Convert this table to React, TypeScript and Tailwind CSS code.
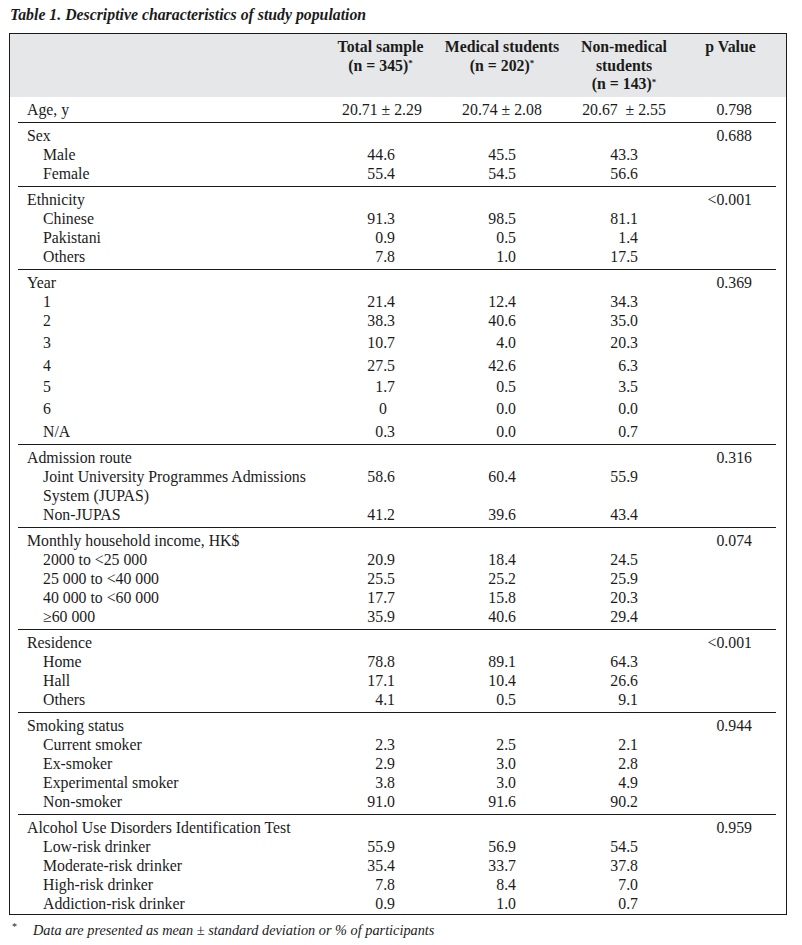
const SECTIONS: {
  title: string;
  p: string;
  rows: (string | number)[][];
}[] = [
  {
    title: 'Sex',
    p: '0.688',
    rows: [
      ['Male', '44.6', '45.5', '43.3'],
      ['Female', '55.4', '54.5', '56.6'],
    ],
  },
  {
    title: 'Ethnicity',
    p: '<0.001',
    rows: [
      ['Chinese', '91.3', '98.5', '81.1'],
      ['Pakistani', '0.9', '0.5', '1.4'],
      ['Others', '7.8', '1.0', '17.5'],
    ],
  },
  {
    title: 'Year',
    p: '0.369',
    rows: [
      ['1', '21.4', '12.4', '34.3'],
      ['2', '38.3', '40.6', '35.0'],
      ['3', '10.7', '4.0', '20.3', 3],
      ['4', '27.5', '42.6', '6.3', 4],
      ['5', '1.7', '0.5', '3.5', 2],
      ['6', '0', '0.0', '0.0', 3],
      ['N/A', '0.3', '0.0', '0.7', 4],
    ],
  },
  {
    title: 'Admission route',
    p: '0.316',
    rows: [
      ['Joint University Programmes Admissions', '58.6', '60.4', '55.9'],
      ['System (JUPAS)', '', '', ''],
      ['Non-JUPAS', '41.2', '39.6', '43.4'],
    ],
  },
  {
    title: 'Monthly household income, HK$',
    p: '0.074',
    rows: [
      ['2000 to <25 000', '20.9', '18.4', '24.5'],
      ['25 000 to <40 000', '25.5', '25.2', '25.9'],
      ['40 000 to <60 000', '17.7', '15.8', '20.3'],
      ['≥60 000', '35.9', '40.6', '29.4'],
    ],
  },
  {
    title: 'Residence',
    p: '<0.001',
    rows: [
      ['Home', '78.8', '89.1', '64.3'],
      ['Hall', '17.1', '10.4', '26.6'],
      ['Others', '4.1', '0.5', '9.1'],
    ],
  },
  {
    title: 'Smoking status',
    p: '0.944',
    rows: [
      ['Current smoker', '2.3', '2.5', '2.1'],
      ['Ex-smoker', '2.9', '3.0', '2.8'],
      ['Experimental smoker', '3.8', '3.0', '4.9'],
      ['Non-smoker', '91.0', '91.6', '90.2'],
    ],
  },
  {
    title: 'Alcohol Use Disorders Identification Test',
    p: '0.959',
    rows: [
      ['Low-risk drinker', '55.9', '56.9', '54.5'],
      ['Moderate-risk drinker', '35.4', '33.7', '37.8'],
      ['High-risk drinker', '7.8', '8.4', '7.0'],
      ['Addiction-risk drinker', '0.9', '1.0', '0.7'],
    ],
  },
];

const GRID = 'grid grid-cols-[302px_121px_122px_122px_91px]';

const EXTRA_TOP: Record<number, string> = {
  2: 'pt-[2px]',
  3: 'pt-[3px]',
  4: 'pt-[4px]',
};

function Star() {
  return <sup className="text-[9px]">*</sup>;
}

function Num({ value, className }: { value: string; className: string }) {
  // integers sit under the units digit, not flush right
  const plain = value !== '' && !value.includes('.');
  return (
    <div className={`text-right ${className}`}>
      {value}
      {plain && <span className="inline-block w-[8px]" />}
    </div>
  );
}

export default function App() {
  return (
    <div
      className="w-[802px] h-[945px] bg-white text-[#1b1b1b] text-[15.8px] leading-[19px]"
      style={{ fontFamily: '"Liberation Serif", "Times New Roman", serif' }}
    >
      {/* Title */}
      <div className="h-[33px] pl-[10px] pt-[5px] font-bold italic">
        Table 1. Descriptive characteristics of study population
      </div>

      <div className="ml-[9px] w-[778px] border border-[#1b1b1b]">
        {/* Header */}
        <div className={`${GRID} h-[63px] bg-[#e6e7e8] pl-[8px] pr-[10px] pt-[4px] font-bold leading-[18.5px] text-center`}>
          <div />
          <div>
            Total sample
            <br />
            (n = 345)
            <Star />
          </div>
          <div>
            Medical students
            <br />
            (n = 202)
            <Star />
          </div>
          <div>
            Non-medical
            <br />
            students
            <br />
            (n = 143)
            <Star />
          </div>
          <div>p Value</div>
        </div>

        <div className="ml-[8px] mr-[10px]">
          {/* Age row */}
          <div className={`${GRID} h-[25px] items-center`}>
            <div className="pl-[9px]">Age, y</div>
            <div className="text-center pl-[3px]">20.71 ± 2.29</div>
            <div className="text-center">20.74 ± 2.08</div>
            <div className="text-center whitespace-pre">20.67  ± 2.55</div>
            <div className="text-right pr-[24px]">0.798</div>
          </div>

          {SECTIONS.map((section, si) => (
            <div
              key={section.title}
              className={`border-t border-[#1b1b1b] pt-[3px] ${si === SECTIONS.length - 1 ? 'pb-[1px]' : 'pb-[3px]'}`}
            >
              <div className={`${GRID} h-[19px]`}>
                <div className="pl-[9px] whitespace-nowrap">{section.title}</div>
                <div />
                <div />
                <div />
                <div className="text-right pr-[24px]">{section.p}</div>
              </div>
              {section.rows.map((row, ri) => {
                const [label, total, med, non, extra] = row as [string, string, string, string, number?];
                return (
                  <div key={ri} className={extra ? EXTRA_TOP[extra] : ''}>
                    <div className={`${GRID} h-[19px]`}>
                      <div className="pl-[25px] whitespace-nowrap">{label}</div>
                      <Num value={total} className="pr-[46px]" />
                      <Num value={med} className="pr-[47px]" />
                      <Num value={non} className="pr-[47px]" />
                      <div />
                    </div>
                  </div>
                );
              })}
            </div>
          ))}
        </div>
      </div>

      {/* Footnote */}
      <div className="flex pt-[6px]">
        <span className="w-[33px] pl-[12px] text-[10px] leading-[12px]">*</span>
        <span className="italic text-[14.3px]">Data are presented as mean ± standard deviation or % of participants</span>
      </div>
    </div>
  );
}
